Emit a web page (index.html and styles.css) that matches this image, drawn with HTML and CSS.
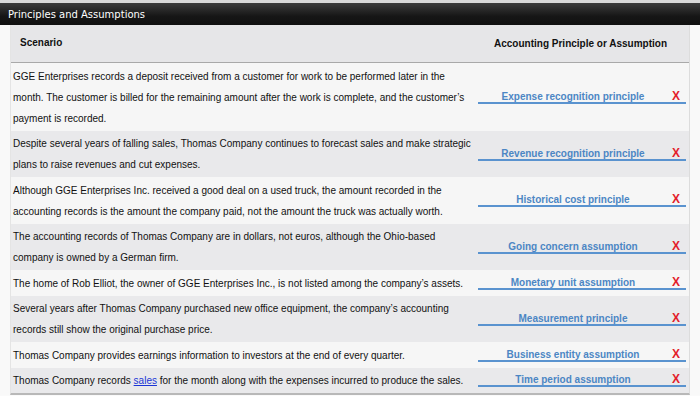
FILE: index.html
```html
<!DOCTYPE html>
<html>
<head>
<meta charset="utf-8">
<link rel="stylesheet" href="styles.css">
</head>
<body>
<div class="page">
  <div class="titlebar">Principles and Assumptions</div>
  <div class="content">
    <div class="table">
      <div class="row head">
        <div class="c1">Scenario</div>
        <div class="c2">Accounting Principle or Assumption</div>
      </div>
      <div class="row light">
        <div class="c1">GGE Enterprises records a deposit received from a customer for work to be performed later in the month. The customer is billed for the remaining amount after the work is complete, and the customer’s payment is recorded.</div>
        <div class="c2"><span class="ans"><span class="txt">Expense recognition principle</span><span class="x">X</span></span></div>
      </div>
      <div class="row dark">
        <div class="c1">Despite several years of falling sales, Thomas Company continues to forecast sales and make strategic plans to raise revenues and cut expenses.</div>
        <div class="c2"><span class="ans"><span class="txt">Revenue recognition principle</span><span class="x">X</span></span></div>
      </div>
      <div class="row light">
        <div class="c1">Although GGE Enterprises Inc. received a good deal on a used truck, the amount recorded in the accounting records is the amount the company paid, not the amount the truck was actually worth.</div>
        <div class="c2"><span class="ans"><span class="txt">Historical cost principle</span><span class="x">X</span></span></div>
      </div>
      <div class="row dark">
        <div class="c1">The accounting records of Thomas Company are in dollars, not euros, although the Ohio-based company is owned by a German firm.</div>
        <div class="c2"><span class="ans"><span class="txt">Going concern assumption</span><span class="x">X</span></span></div>
      </div>
      <div class="row light">
        <div class="c1">The home of Rob Elliot, the owner of GGE Enterprises Inc., is not listed among the company’s assets.</div>
        <div class="c2"><span class="ans"><span class="txt">Monetary unit assumption</span><span class="x">X</span></span></div>
      </div>
      <div class="row dark">
        <div class="c1">Several years after Thomas Company purchased new office equipment, the company’s accounting records still show the original purchase price.</div>
        <div class="c2"><span class="ans"><span class="txt">Measurement principle</span><span class="x">X</span></span></div>
      </div>
      <div class="row light">
        <div class="c1">Thomas Company provides earnings information to investors at the end of every quarter.</div>
        <div class="c2"><span class="ans"><span class="txt">Business entity assumption</span><span class="x">X</span></span></div>
      </div>
      <div class="row dark last">
        <div class="c1">Thomas Company records <a class="link" href="#">sales</a> for the month along with the expenses incurred to produce the sales.</div>
        <div class="c2"><span class="ans"><span class="txt">Time period assumption</span><span class="x">X</span></span></div>
      </div>
    </div>
  </div>
</div>
</body>
</html>
```
FILE: styles.css
```css
html, body {
  margin: 0;
  padding: 0;
  background: #fafafa;
}
.page {
  width: 700px;
  height: 396px;
  overflow: hidden;
  border-top: 3px solid #d9d9d9;
  box-sizing: border-box;
  font-family: "Liberation Sans", Arial, sans-serif;
  color: #111;
}
.titlebar {
  height: 22px;
  line-height: 23px;
  background: linear-gradient(#3c3c3c, #161616 60%, #101010);
  color: #fff;
  font-family: "DejaVu Sans", sans-serif;
  font-size: 10px;
  padding-left: 8px;
}
.content {
  padding: 0 10px 0 10px;
  background: #f9f9f9;
}
.table {
  border-left: 1px solid #e4e4e4;
  border-right: 1px solid #dcdcdc;
  border-bottom: 2px solid #b8b8b8;
}
.row {
  display: grid;
  grid-template-columns: 462px 1fr;
  font-size: 10px;
  line-height: 21px;
}
.row.head {
  background: #e6e6e8;
  height: 37px;
  line-height: 35px;
  font-weight: bold;
  font-size: 10px;
  border-bottom: 1px solid #a9a9a9;
}
.row.head .c1 {
  padding: 0 0 0 9px;
}
.row.head .c2 {
  justify-content: flex-end;
  padding-right: 22px;
}
.row.light { background: #f6f6f6; }
.row.dark { background: #e9e9eb; }
.c1 {
  padding: 2.5px 2px 2px 2px;
}
.c2 {
  display: flex;
  align-items: center;
  padding-left: 5px;
}
.ans {
  position: relative;
  display: flex;
  width: 208px;
  line-height: 11px;
  border-bottom: 2px solid #5a93cf;
  margin-top: 1px;
}
.txt {
  flex: 1;
  text-align: center;
  font-weight: bold;
  color: #4c86c4;
  padding-right: 4px;
}
.x {
  color: #e3202a;
  font-weight: bold;
  font-size: 12px;
  width: 14px;
  text-align: left;
}
.link {
  color: #1a35d6;
  text-decoration: underline;
}
```
